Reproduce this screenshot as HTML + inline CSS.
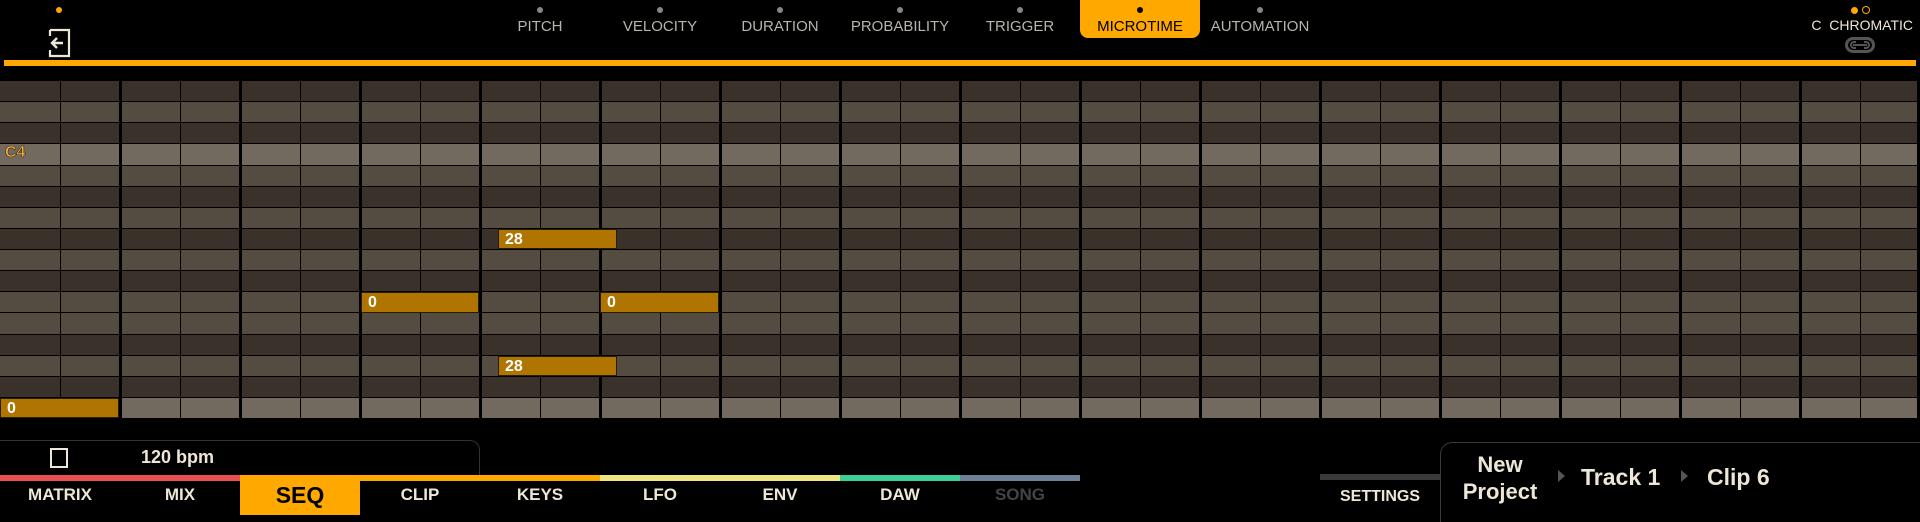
<!DOCTYPE html>
<html><head><meta charset="utf-8"><style>
*{margin:0;padding:0;box-sizing:border-box}
body{width:1920px;height:515px;background:#000;position:relative;overflow:hidden;font-family:"Liberation Sans",sans-serif;color:#eee6d6}
.a{position:absolute}
.tab{position:absolute;top:0;width:120px;height:38px;text-align:center;font-size:15px;color:#b8b4ae}
.tab i{display:block;width:6px;height:6px;border-radius:50%;background:#8a8680;margin:7px auto 5px}
.tab.on{background:#ffa800;color:#000;border-radius:0 0 8px 8px}
.tab.on i{background:#000}
.row{position:absolute;left:0;width:1917px}
.vl{position:absolute;top:81px;height:338px;background:#000}
.note{position:absolute;background:#b07400;border:1px solid #2a1e00;color:#fff;font-size:16px;font-weight:bold;padding-left:6px;line-height:19px}
.lab{position:absolute;top:482px;width:120px;text-align:center;font-size:17px;font-weight:bold;color:#eee6d6;line-height:26px}
</style></head><body>
<div class="a" style="left:56px;top:7px;width:6px;height:6px;border-radius:50%;background:#ffa800"></div>
<svg class="a" style="left:47px;top:27px" width="26" height="32" viewBox="0 0 26 32"><path d="M3 3H22V29H3V23M3 9V3" fill="none" stroke="#eee6d6" stroke-width="2.2"/><path d="M16 16H5M10 11L5 16L10 21" fill="none" stroke="#eee6d6" stroke-width="2.4"/></svg>
<div class="tab" style="left:480px"><i></i>PITCH</div>
<div class="tab" style="left:600px"><i></i>VELOCITY</div>
<div class="tab" style="left:720px"><i></i>DURATION</div>
<div class="tab" style="left:840px"><i></i>PROBABILITY</div>
<div class="tab" style="left:960px"><i></i>TRIGGER</div>
<div class="tab on" style="left:1080px"><i></i>MICROTIME</div>
<div class="tab" style="left:1200px"><i></i>AUTOMATION</div>
<div class="a" style="left:1851px;top:7px;width:7px;height:7px;border-radius:50%;background:#ffa800"></div>
<div class="a" style="left:1862px;top:6px;width:8px;height:8px;border-radius:50%;border:1.5px solid #ffa800"></div>
<div class="a" style="right:7px;top:17px;font-size:14px;color:#eee6d6;white-space:nowrap">C&nbsp; CHROMATIC</div>
<svg class="a" style="left:1845px;top:37px" width="30" height="16" viewBox="0 0 30 16"><rect x="1.5" y="1.5" width="27" height="13" rx="6.5" fill="none" stroke="#555" stroke-width="3"/><path d="M8 8H22M11 5H9a3 3 0 0 0 0 6h2M19 5h2a3 3 0 0 1 0 6h-2" fill="none" stroke="#555" stroke-width="2"/></svg>
<div class="a" style="left:4px;top:60px;width:1912px;height:6px;background:#ffa800"></div>
<div id="g"></div>
<div class="a" style="left:0;top:440px;width:480px;height:40px;border:1.5px solid #333;border-left:none;border-bottom:none;border-radius:0 10px 0 0"></div>
<div class="a" style="left:50px;top:448px;width:18px;height:20px;border:2px solid #eee6d6"></div>
<div class="a" style="left:141px;top:447px;font-size:18px;font-weight:bold">120 bpm</div>
<div class="a" style="left:0;top:475px;width:240px;height:6px;background:#e85050"></div>
<div class="a" style="left:240px;top:475px;width:360px;height:6px;background:#ffa800"></div>
<div class="a" style="left:600px;top:475px;width:240px;height:6px;background:#ede682"></div>
<div class="a" style="left:840px;top:475px;width:120px;height:6px;background:#3fcf96"></div>
<div class="a" style="left:960px;top:475px;width:120px;height:6px;background:#6e8096"></div>
<div class="a" style="left:240px;top:475px;width:120px;height:40px;background:#ffa800"></div>
<div class="lab" style="left:0">MATRIX</div>
<div class="lab" style="left:120px">MIX</div>
<div class="lab" style="left:240px;color:#000;font-size:23px">SEQ</div>
<div class="lab" style="left:360px">CLIP</div>
<div class="lab" style="left:480px">KEYS</div>
<div class="lab" style="left:600px">LFO</div>
<div class="lab" style="left:720px">ENV</div>
<div class="lab" style="left:840px">DAW</div>
<div class="lab" style="left:960px;color:#444">SONG</div>
<div class="a" style="left:1320px;top:474px;width:120px;height:6px;background:#3a3a3a"></div>
<div class="lab" style="left:1320px;top:484px;font-size:16px">SETTINGS</div>
<div class="a" style="left:1440px;top:442px;width:490px;height:80px;border:1.5px solid #3a3a3a;border-right:none;border-bottom:none;border-radius:12px 0 0 0"></div>
<div class="a" style="left:1450px;top:451px;width:100px;text-align:center;font-size:22px;font-weight:bold;line-height:27px">New<br>Project</div>
<div class="a" style="left:1558px;top:470px;width:0;height:0;border-left:7px solid #555;border-top:6px solid transparent;border-bottom:6px solid transparent"></div>
<div class="a" style="left:1581px;top:464px;font-size:23px;font-weight:bold">Track 1</div>
<div class="a" style="left:1681px;top:470px;width:0;height:0;border-left:7px solid #555;border-top:6px solid transparent;border-bottom:6px solid transparent"></div>
<div class="a" style="left:1707px;top:464px;font-size:23px;font-weight:bold">Clip 6</div>
<script>
var g=document.getElementById('g'),h='';
var t=['d','m','d','l','m','d','m','d','m','d','m','m','d','m','d','l'];
var c={d:'#3a312b',m:'#544b41',l:'#726a5f'};
for(var i=0;i<16;i++){var y=81+i*21.125;h+='<div class="row" style="top:'+y+'px;height:21.2px;background:'+c[t[i]]+';border-bottom:1.5px solid #000"></div>';}
for(var j=1;j<32;j++){var x=j*60;h+='<div class="vl" style="left:'+(j%2?x-0.5:x-1.5)+'px;width:'+(j%2?1:3)+'px"></div>';}
h+='<div class="vl" style="left:1917px;width:3px"></div>';
function n(x,w,r,v){h+='<div class="note" style="left:'+x+'px;width:'+w+'px;top:'+(81+r*21.125)+'px;height:20.5px">'+v+'</div>';}
n(498,119,7,'28');n(361,118,10,'0');n(600,119,10,'0');n(498,119,13,'28');n(0,119,15,'0');
h+='<div class="a" style="left:5px;top:144px;font-size:16px;font-weight:bold;color:#f5b040;-webkit-text-stroke:0.6px #3a2a10">C4</div>';
g.innerHTML=h;
</script>
</body></html>
